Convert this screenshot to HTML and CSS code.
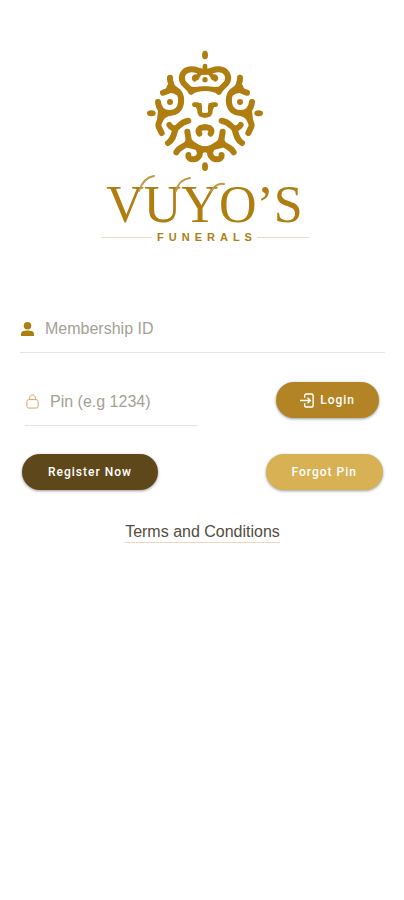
FILE: index.html
```html
<!DOCTYPE html>
<html lang="en">
<head>
<meta charset="utf-8">
<meta name="viewport" content="width=device-width, initial-scale=1">
<title>Vuyo's Funerals</title>
<link rel="stylesheet" href="styles.css">
</head>
<body>
<main class="page">
  <header class="brand">
    <svg class="emblem" viewBox="0 0 390 390" aria-hidden="true">
      <defs>
        <g id="half">
          <path d="M195 80C178 82 172 72 153 73C130 74 122 94 127 108C131 120 146 124 153 140"/>
          <path class="fine" d="M164 103C159 98 166 92 171 98"/>
          <path class="solid" d="M195 72L176 82L160 98L172 106L184 90L195 86Z"/>
          <path class="solid" d="M136 120C160 130 174 124 195 124V138C178 138 165 141 154 150Z"/>
          <path d="M90 98C89 112 97 118 94 128C88 140 78 139 69 143M94 128C117 136 126 149 123 174C120 194 105 205 87 204C66 203 56 190 54 171"/>
          <path class="solid" d="M82 120L98 112L126 148L110 151Q96 139 72 147Z"/>
          <path d="M64 202C70 226 51 228 56 245L65 264"/>
          <path class="solid" d="M55 190L88 213Q66 220 60 244L50 232Z"/>
          <path d="M88 240C94 252 102 247 106 254C101 271 98 286 84 294M104 252C115 250 119 231 145 227"/>
          <path class="solid" d="M90 246L121 236L104 276Z"/>
          <path d="M142 260C144 278 151 287 140 297C126 308 116 307 109 322M145 292C162 295 170 313 195 313M176 312C186 330 173 343 160 343C150 343 144 338 145 330"/>
          <path class="solid" d="M139 280L154 282Q170 303 195 305V320L184 327L168 315L134 306Z"/>
          <path class="fine" d="M163 179C178 178 181 181 179 193C178 207 181 211 195 211"/>
          <path class="solid" d="M160 174H184L186 204L174 198Z"/>
          <path d="M178 266C172 255 178 247 195 247"/>
          <circle class="solid" cx="90" cy="171" r="9"/>
          <ellipse class="solid" cx="34" cy="205" rx="13" ry="9"/>
        </g>
      </defs>
      <g class="mark">
        <use href="#half"/>
        <use href="#half" transform="translate(390 0) scale(-1 1)"/>
        <path class="fine" d="M195 63V78"/>
        <ellipse class="solid" cx="195" cy="30" rx="9" ry="13"/>
        <ellipse class="solid" cx="195" cy="365" rx="9" ry="13"/>
        <circle class="solid" cx="195" cy="104" r="8"/>
      </g>
    </svg>
    <div class="wordmark">
      <svg class="flourish" viewBox="0 0 210 60" aria-hidden="true">
        <path d="M33 16C36 7 41 2 48 1M70 16C72 8 76 4 84 3M105 16C109 10 113 8 118 9"/>
      </svg>
      <h1 class="name">VUYO’S</h1>
    </div>
    <p class="tagline">FUNERALS</p>
  </header>

  <form class="login">
    <div class="field">
      <svg class="icon" viewBox="0 0 16 16" aria-hidden="true"><circle class="person" cx="8" cy="5" r="4"/><path class="person" d="M1 16V14C1 11 4 10 8 10S15 11 15 14V16Z"/></svg>
      <input class="input" type="text" aria-label="Membership ID" placeholder="Membership ID">
    </div>
    <div class="row">
      <div class="field pin">
        <svg class="icon" viewBox="0 0 16 16" aria-hidden="true"><path class="lock" d="M5 6V4C5 0 11 0 11 4V6M4 6H12Q14 6 14 8V13Q14 15 12 15H4Q2 15 2 13V8Q2 6 4 6Z"/></svg>
        <input class="input" type="password" aria-label="Pin" placeholder="Pin (e.g 1234)">
      </div>
      <button class="button primary" type="submit">
        <svg class="enter" viewBox="0 0 16 16" aria-hidden="true"><path d="M5 5V3Q5 1 7 1H12Q14 1 14 3V13Q14 15 12 15H7Q5 15 5 13V11M0 8H11M8 5L11 8L8 11"/></svg>
        Login
      </button>
    </div>
    <div class="actions">
      <button class="button dark" type="button">Register Now</button>
      <button class="button light" type="button">Forgot Pin</button>
    </div>
  </form>
  <a class="terms" href="#terms">Terms and Conditions</a>
</main>
</body>
</html>
```
FILE: styles.css
```css
* {
  box-sizing: border-box;
}

body {
  margin: 0;
  background: #fff;
  font-family: "Liberation Sans", Arial, sans-serif;
}

.page {
  display: flex;
  flex-direction: column;
  align-items: center;
  padding: 45px 19px 45px 20px;
}

.brand {
  display: flex;
  flex-direction: column;
  align-items: center;
  padding-left: 4px;
  color: #b07e10;
}

.emblem {
  width: 130px;
  height: 130px;
}

.mark {
  fill: none;
  stroke: #b07e10;
  stroke-width: 18;
  stroke-linecap: round;
  stroke-linejoin: round;
}

.fine {
  stroke-width: 14;
}

.solid {
  fill: #b07e10;
  stroke: none;
}

.wordmark {
  position: relative;
  margin-top: 4px;
}

.name {
  margin: 0;
  font: 400 52px/52px "Liberation Serif", serif;
}

.flourish {
  position: absolute;
  left: 0;
  top: -4px;
  width: 210px;
  height: 60px;
  fill: none;
  stroke: #c09a44;
  stroke-width: 2;
  stroke-linecap: round;
}

.tagline {
  display: flex;
  align-items: center;
  width: 208px;
  margin: 0;
  font: 700 11px/12px "Liberation Sans", sans-serif;
  letter-spacing: 5px;
}

.tagline::before,
.tagline::after {
  content: "";
  flex: 1;
  height: 1px;
  background: #e8dcc0;
}

.tagline::before {
  margin-right: 5px;
}

.login {
  width: 100%;
  margin-top: 62px;
}

.field {
  display: flex;
  align-items: center;
  gap: 10px;
  height: 48px;
  border-bottom: 1px solid #e4e4e4;
}

.icon {
  flex: none;
  width: 15px;
  height: 15px;
}

.person {
  fill: #b07e10;
}

.lock {
  fill: none;
  stroke: #cf9f62;
  stroke-width: 1;
}

.input {
  flex: 1;
  min-width: 0;
  padding: 0;
  border: 0;
  outline: 0;
  background: none;
  color: #554a38;
  font: 16px/20px "Liberation Sans", Arial, sans-serif;
}

.input::placeholder {
  color: #a5a194;
  opacity: 1;
}

.row {
  display: flex;
  justify-content: space-between;
  align-items: center;
  min-height: 52px;
  margin-top: 21px;
  padding: 0 6px 0 5px;
}

.pin {
  align-self: flex-end;
  width: 173px;
}

.actions {
  display: flex;
  justify-content: space-between;
  margin-top: 28px;
  padding: 0 2px;
}

.button {
  display: flex;
  align-items: center;
  gap: 5px;
  height: 36px;
  padding: 0 26px;
  border: 0;
  border-radius: 18px;
  color: #fff;
  font: 500 12px/16px Roboto, sans-serif;
  letter-spacing: 1px;
  box-shadow: 0 1px 3px rgba(0, 0, 0, 0.4);
}

.primary {
  padding: 0 24px;
  background: #b38425;
}

.dark {
  background: #5e481b;
}

.light {
  background: #d7b154;
}

.enter {
  width: 15px;
  height: 15px;
  fill: none;
  stroke: #fff;
  stroke-width: 1.5;
}

.terms {
  margin-top: 32px;
  border-bottom: 1px solid #ecd8bf;
  color: #554c40;
  font-size: 16px;
  line-height: 20px;
  text-decoration: none;
}
```
